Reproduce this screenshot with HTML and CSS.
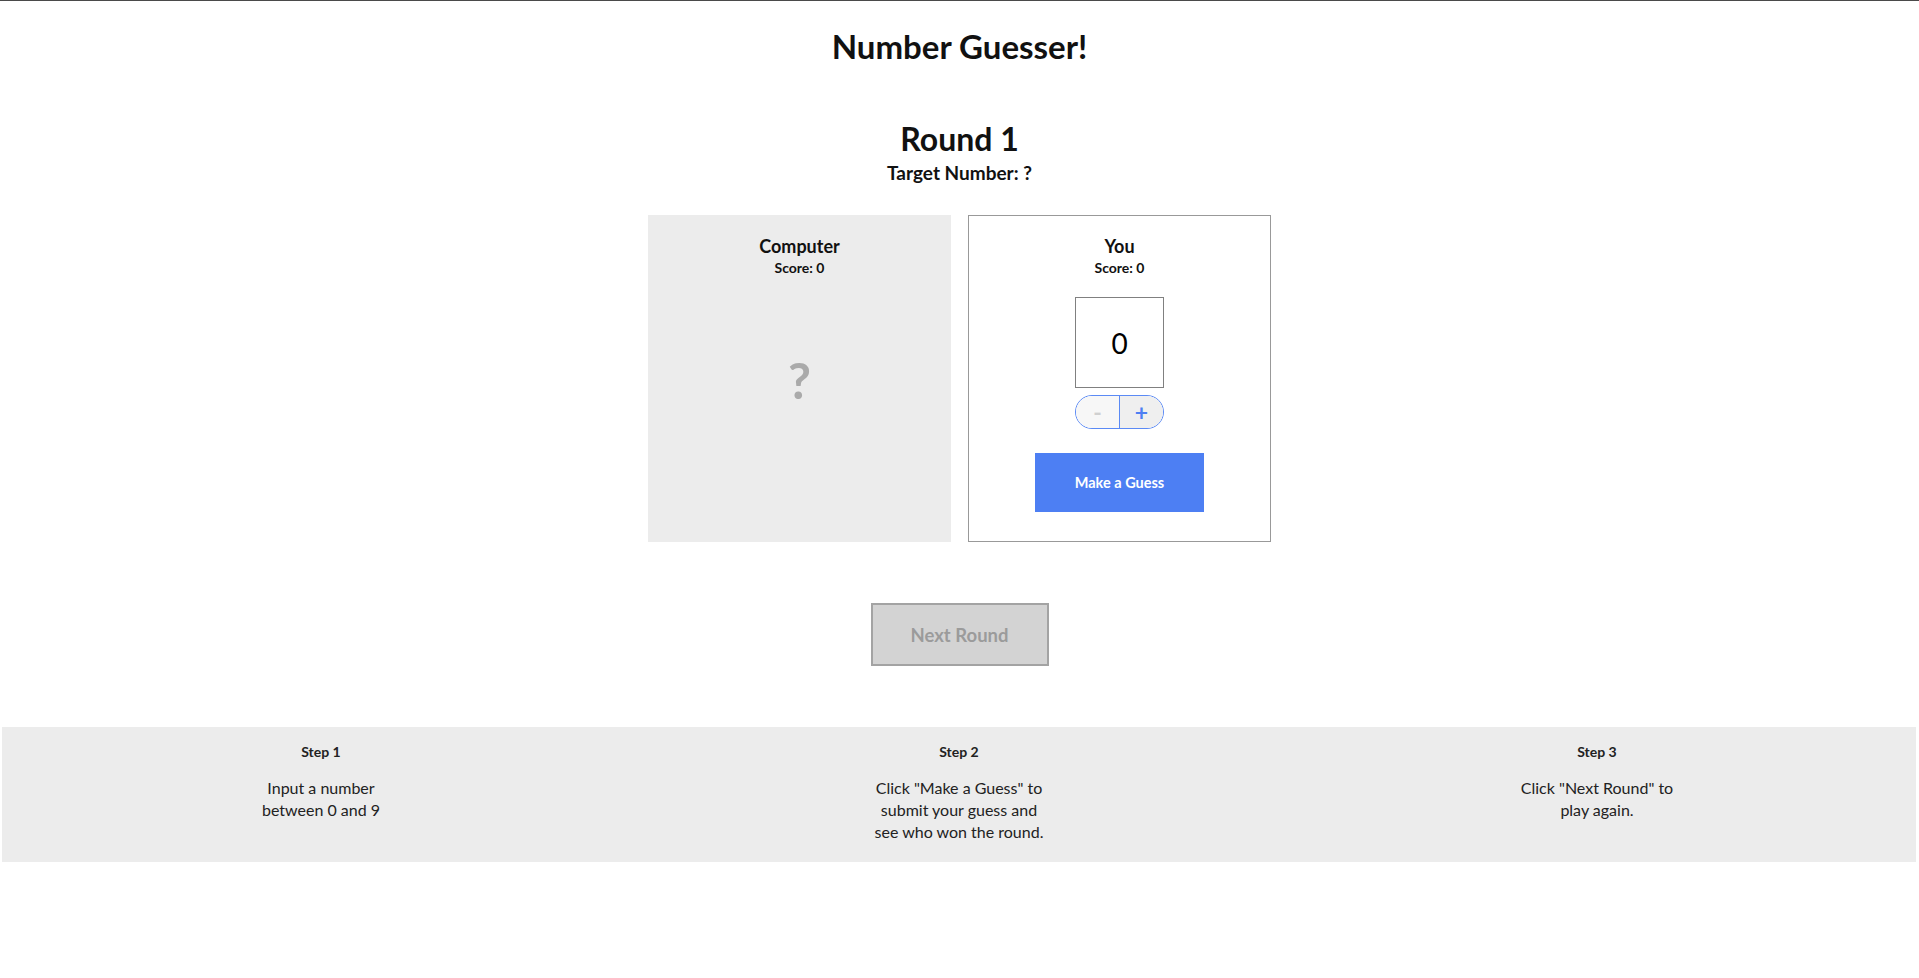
FILE: index.html
```html
<!DOCTYPE html>
<html lang="en">
<head>
    <meta charset="UTF-8">
    <meta name="viewport" content="width=device-width, initial-scale=1.0">
    <title>Number Guesser!</title>
    <link rel="stylesheet" href="styles.css">
</head>
<body>
    <h1 class="title">Number Guesser!</h1>

    <main class="game">
        <h2 class="round">Round <span id="round">1</span></h2>
        <h3 class="target">Target Number: <span id="target">?</span></h3>

        <div class="players">
            <section class="player computer">
                <h4 class="player-name">Computer</h4>
                <p class="score">Score: <span id="computerScore">0</span></p>
                <div class="computer-guess" id="computerGuess">?</div>
            </section>

            <section class="player human">
                <h4 class="player-name">You</h4>
                <p class="score">Score: <span id="humanScore">0</span></p>
                <input class="guess-input" type="number" id="humanGuess" min="0" max="9" value="0">
                <div class="stepper">
                    <button type="button" class="step-btn minus" id="minus" disabled>-</button>
                    <button type="button" class="step-btn plus" id="plus">+</button>
                </div>
                <button type="button" class="guess-btn" id="guess">Make a Guess</button>
            </section>
        </div>

        <button type="button" class="next-btn" id="next" disabled>Next Round</button>
    </main>

    <footer class="steps">
        <div class="step">
            <h5>Step 1</h5>
            <p>Input a number<br>between 0 and 9</p>
        </div>
        <div class="step">
            <h5>Step 2</h5>
            <p>Click "Make a Guess" to<br>submit your guess and<br>see who won the round.</p>
        </div>
        <div class="step">
            <h5>Step 3</h5>
            <p>Click "Next Round" to<br>play again.</p>
        </div>
    </footer>

    <script>
        const input = document.getElementById('humanGuess');
        const minus = document.getElementById('minus');
        const plus = document.getElementById('plus');

        function updateStepper() {
            minus.disabled = input.value <= 0;
            plus.disabled = input.value >= 9;
        }

        minus.addEventListener('click', () => { input.value--; updateStepper(); });
        plus.addEventListener('click', () => { input.value++; updateStepper(); });
        input.addEventListener('input', updateStepper);
    </script>
</body>
</html>
```

FILE: styles.css
```css
body {
    font-family: Lato, "Open Sans", sans-serif;
    color: #111;
    margin: 0;
    border-top: 1px solid #4a4a4a;
    background: white;
}
.title {
    margin: 25px 0 0;
    font-size: 33px;
    line-height: 40px;
    text-align: center;
}
.game {
    display: flex;
    flex-direction: column;
    align-items: center;
}
.round {
    margin: 53px 0 0;
    font-size: 32px;
    line-height: 40px;
}
.target {
    margin: 2px 0 0;
    font-size: 19px;
    line-height: 24px;
}
.players {
    display: flex;
    gap: 17px;
    margin-top: 30px;
}
.player {
    width: 303px;
    height: 327px;
    box-sizing: border-box;
    padding-top: 18px;
    display: flex;
    flex-direction: column;
    align-items: center;
    border: 1px solid #999;
}
.computer {
    background-color: #ececec;
    border-color: #ececec;
}
.player-name {
    margin: 0;
    font-size: 18px;
    line-height: 24px;
}
.score {
    margin: 1px 0 0;
    font-size: 14px;
    font-weight: bold;
    line-height: 18px;
}
.computer-guess {
    margin-top: 73px;
    font-size: 50px;
    line-height: 60px;
    font-weight: bold;
    color: #aaa;
}
.guess-input {
    width: 89px;
    height: 91px;
    box-sizing: border-box;
    margin-top: 20px;
    border: 1px solid #808080;
    font-family: inherit;
    font-size: 28px;
    text-align: center;
    color: #000;
    appearance: textfield;
    -moz-appearance: textfield;
}
.guess-input::-webkit-outer-spin-button,
.guess-input::-webkit-inner-spin-button {
    -webkit-appearance: none;
    margin: 0;
}
.stepper {
    display: flex;
    width: 89px;
    height: 34px;
    box-sizing: border-box;
    margin-top: 7px;
    border: 1px solid #5b8af5;
    border-radius: 17px;
    overflow: hidden;
}
.step-btn {
    flex: 1;
    border: none;
    padding: 0;
    font-family: inherit;
    font-size: 23px;
    font-weight: bold;
    line-height: 30px;
    color: #4d7ff3;
    background-color: #efefef;
    cursor: pointer;
}
.step-btn.plus {
    border-left: 1px solid #5b8af5;
}
.step-btn:disabled {
    color: #d0d0d0;
    background-color: #f7f7f7;
    cursor: default;
}
.guess-btn {
    width: 169px;
    height: 59px;
    margin-top: 24px;
    border: none;
    background-color: #4d7ff3;
    color: white;
    font-family: inherit;
    font-size: 14.5px;
    font-weight: bold;
    cursor: pointer;
}
.next-btn {
    width: 178px;
    height: 63px;
    margin-top: 61px;
    border: 2px solid #a3a3a3;
    background-color: #d3d3d3;
    color: #9b9b9b;
    font-family: inherit;
    font-size: 18.5px;
    font-weight: bold;
}
.steps {
    display: grid;
    grid-template-columns: 1fr 1fr 1fr;
    margin: 61px 3px 0 2px;
    padding: 16px 0 19px;
    background-color: #ececec;
    text-align: center;
    color: #222;
}
.step h5 {
    margin: 0;
    font-size: 14px;
    line-height: 18px;
}
.step p {
    margin: 16px 0 0;
    font-size: 16px;
    line-height: 22px;
}
```
